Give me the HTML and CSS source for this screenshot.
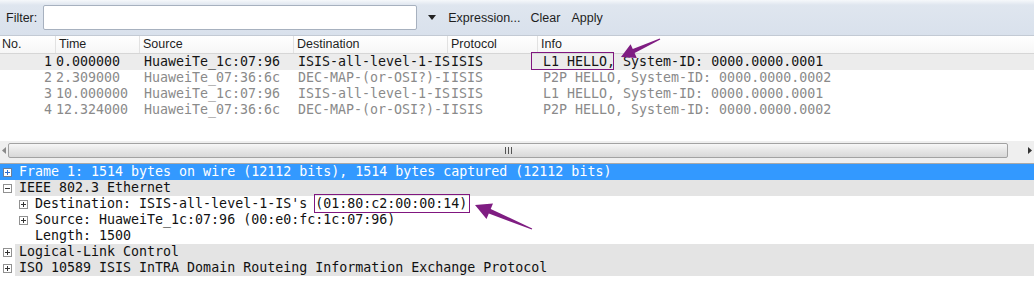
FILE: index.html
```html
<!DOCTYPE html>
<html lang="en">
<head>
    <meta charset="UTF-8">
    <title>Wireshark - ISIS capture</title>
    <link rel="stylesheet" href="styles.css">
</head>
<body>
    <div class="filterbar">
        <span class="flabel">Filter:</span>
        <div class="finput"></div>
        <svg class="fdrop" width="8" height="5" viewBox="0 0 8 5"><path d="M0 0H8L4 5Z" fill="#222"/></svg>
        <span class="flink expr">Expression...</span>
        <span class="flink clear">Clear</span>
        <span class="flink apply">Apply</span>
    </div>

    <div class="plist-head">
        <span class="hno">No.</span>
        <span>Time</span>
        <span>Source</span>
        <span>Destination</span>
        <span>Protocol</span>
        <span>Info</span>
    </div>

    <div class="plist">
        <div class="prow sel">
            <span class="cno">1</span><span class="ctime">0.000000</span><span class="csrc">HuaweiTe_1c:07:96</span><span class="cdst">ISIS-all-level-1-IS</span><span class="cproto">ISIS</span><span class="cinfo"><span class="mark mark-info">L1 HELLO,</span> System-ID: 0000.0000.0001</span>
        </div>
        <div class="prow">
            <span class="cno">2</span><span class="ctime">2.309000</span><span class="csrc">HuaweiTe_07:36:6c</span><span class="cdst">DEC-MAP-(or-OSI?)-I</span><span class="cproto">ISIS</span><span class="cinfo">P2P HELLO, System-ID: 0000.0000.0002</span>
        </div>
        <div class="prow">
            <span class="cno">3</span><span class="ctime">10.000000</span><span class="csrc">HuaweiTe_1c:07:96</span><span class="cdst">ISIS-all-level-1-IS</span><span class="cproto">ISIS</span><span class="cinfo">L1 HELLO, System-ID: 0000.0000.0001</span>
        </div>
        <div class="prow">
            <span class="cno">4</span><span class="ctime">12.324000</span><span class="csrc">HuaweiTe_07:36:6c</span><span class="cdst">DEC-MAP-(or-OSI?)-I</span><span class="cproto">ISIS</span><span class="cinfo">P2P HELLO, System-ID: 0000.0000.0002</span>
        </div>
    </div>

    <div class="hscroll">
        <svg class="sarrow" width="4" height="7" viewBox="0 0 4 7"><path d="M4 0V7L0 3.5Z" fill="#8a8a8a"/></svg>
        <div class="thumb"><span class="grip"></span></div>
        <svg class="sarrow" width="4" height="7" viewBox="0 0 4 7"><path d="M0 0V7L4 3.5Z" fill="#333"/></svg>
    </div>

    <div class="splitter"></div>

    <div class="tree">
        <div class="trow top selected">
            <svg class="exp" width="9" height="9" viewBox="0 0 9 9"><rect x="0.5" y="0.5" width="8" height="8" fill="#fff" stroke="#6d7f99"/><path d="M2 4.5H7M4.5 2V7" stroke="#2f6fcf"/></svg>
            <span class="tlabel">Frame 1: 1514 bytes on wire (12112 bits), 1514 bytes captured (12112 bits)</span>
        </div>
        <div class="trow top shaded">
            <svg class="exp" width="9" height="9" viewBox="0 0 9 9"><rect x="0.5" y="0.5" width="8" height="8" fill="#fff" stroke="#919191"/><path d="M2 4.5H7" stroke="#333"/></svg>
            <span class="tlabel">IEEE 802.3 Ethernet</span>
        </div>
        <div class="trow child">
            <svg class="exp" width="9" height="9" viewBox="0 0 9 9"><rect x="0.5" y="0.5" width="8" height="8" fill="#fff" stroke="#919191"/><path d="M2 4.5H7M4.5 2V7" stroke="#333"/></svg>
            <span class="tlabel">Destination: ISIS-all-level-1-IS's <span class="mark mark-mac">(01:80:c2:00:00:14)</span></span>
        </div>
        <div class="trow child">
            <svg class="exp" width="9" height="9" viewBox="0 0 9 9"><rect x="0.5" y="0.5" width="8" height="8" fill="#fff" stroke="#919191"/><path d="M2 4.5H7M4.5 2V7" stroke="#333"/></svg>
            <span class="tlabel">Source: HuaweiTe_1c:07:96 (00:e0:fc:1c:07:96)</span>
        </div>
        <div class="trow leaf">
            <span class="tlabel">Length: 1500</span>
        </div>
        <div class="trow top shaded">
            <svg class="exp" width="9" height="9" viewBox="0 0 9 9"><rect x="0.5" y="0.5" width="8" height="8" fill="#fff" stroke="#919191"/><path d="M2 4.5H7M4.5 2V7" stroke="#333"/></svg>
            <span class="tlabel">Logical-Link Control</span>
        </div>
        <div class="trow top shaded">
            <svg class="exp" width="9" height="9" viewBox="0 0 9 9"><rect x="0.5" y="0.5" width="8" height="8" fill="#fff" stroke="#919191"/><path d="M2 4.5H7M4.5 2V7" stroke="#333"/></svg>
            <span class="tlabel">ISO 10589 ISIS InTRA Domain Routeing Information Exchange Protocol</span>
        </div>
    </div>

    <!-- annotation arrows drawn over the capture -->
    <svg class="arrows" width="1034" height="282" viewBox="0 0 1034 282">
        <polygon points="621,57 636.8,57.9 634.6,53.1 660.3,39.5 659.7,38.5 632.8,49.1 630.6,44.3" fill="#7f1d82"/>
        <polygon points="475,205 486.5,219 488.8,213.5 531.8,229.5 532.2,228.4 490.7,208.9 493,203.4" fill="#7f1d82"/>
    </svg>
</body>
</html>
```

FILE: styles.css
```css
body {
    margin: 0;
    width: 1034px;
    height: 282px;
    overflow: hidden;
    position: relative;
    background: #fff;
    font-family: "Liberation Sans", Arial, sans-serif;
}

/* filter toolbar */
.filterbar {
    display: flex;
    align-items: center;
    height: 35px;
    border-bottom: 1px solid #c3cad4;
    background: linear-gradient(#f6f8fb, #dfe6ef 5px, #d9e1ec);
    font-size: 12.5px;
    color: #1e1e1e;
}
.flabel {
    margin-left: 6px;
}
.finput {
    width: 372px;
    height: 23px;
    margin-left: 6px;
    background: #fff;
    border: 1px solid #a7b1bf;
    border-radius: 2px;
}
.fdrop {
    margin-left: 11px;
}
.flink.expr {
    margin-left: 12px;
}
.flink.clear {
    margin-left: 10px;
}
.flink.apply {
    margin-left: 11px;
}

/* packet list */
.plist-head {
    display: grid;
    grid-template-columns: 56px 84px 154px 154px 90px 1fr;
    height: 17px;
    line-height: 17px;
    border-bottom: 1px solid #d6d6d6;
    background: linear-gradient(#fff, #f6f6f6);
    font-size: 12.5px;
    color: #1e1e1e;
}
.plist-head span {
    padding-left: 3px;
    border-right: 1px solid #e2e2e2;
}
.plist-head .hno {
    padding-left: 2px;
}
.plist-head span:last-child {
    border-right: none;
}
.plist {
    height: 87px;
}
.prow {
    display: grid;
    grid-template-columns: 53px 87px 154px 154px 89px 1fr;
    height: 16px;
    line-height: 16px;
    font-family: "DejaVu Sans Mono", monospace;
    font-size: 13.3px;
    color: #8a8a8a;
    white-space: nowrap;
}
.prow.sel {
    background: #ececec;
    color: #141414;
}
.cno {
    text-align: right;
    padding-right: 1px;
}
.ctime {
    padding-left: 3px;
}
.csrc, .cdst {
    padding-left: 4px;
}
.cproto {
    padding-left: 3px;
}
.cinfo {
    padding-left: 6px;
}

/* horizontal scrollbar */
.hscroll {
    display: flex;
    align-items: center;
    height: 18px;
    background: #efefef;
}
.sarrow {
    margin: 0 2px;
}
.thumb {
    flex: 1;
    height: 13px;
    margin-right: 18px;
    border: 1px solid #a2a2a2;
    border-radius: 2px;
    background: linear-gradient(#f7f7f7, #e6e6e6 50%, #d8d8d8);
    display: flex;
    align-items: center;
    justify-content: center;
}
.grip {
    width: 5px;
    height: 7px;
    border-left: 1px solid #555;
    border-right: 1px solid #555;
    background: linear-gradient(90deg, transparent 2px, #555 2px, #555 3px, transparent 3px);
}
.splitter {
    height: 4px;
    background: #efefef;
    border-bottom: 1px solid #a9a9a9;
}

/* details tree */
.tree {
    font-family: "DejaVu Sans Mono", monospace;
    font-size: 13.3px;
    color: #111;
}
.trow {
    display: flex;
    align-items: center;
    height: 16px;
    line-height: 16px;
    white-space: nowrap;
}
.trow.top {
    padding-left: 3px;
}
.trow.child {
    padding-left: 19px;
}
.trow.leaf {
    padding-left: 35px;
}
.exp {
    flex: none;
    margin-right: 3px;
}
.tlabel {
    padding-left: 4px;
}
.trow.leaf .tlabel {
    padding-left: 0;
}
.trow.shaded .tlabel {
    flex: 1;
    background: #e4e4e4;
}
.trow.selected {
    background: #3399ff;
    color: #fff;
}

/* purple callout boxes */
.mark {
    position: relative;
}
.mark::after {
    content: "";
    position: absolute;
    border: 1px solid #80167f;
}
.mark-info::after {
    left: -12px;
    right: 1px;
    top: -2px;
    bottom: -1px;
}
.mark-mac::after {
    left: -1px;
    right: -3px;
    top: -2px;
    bottom: -2px;
}
.arrows {
    position: absolute;
    left: 0;
    top: 0;
    pointer-events: none;
}
```
